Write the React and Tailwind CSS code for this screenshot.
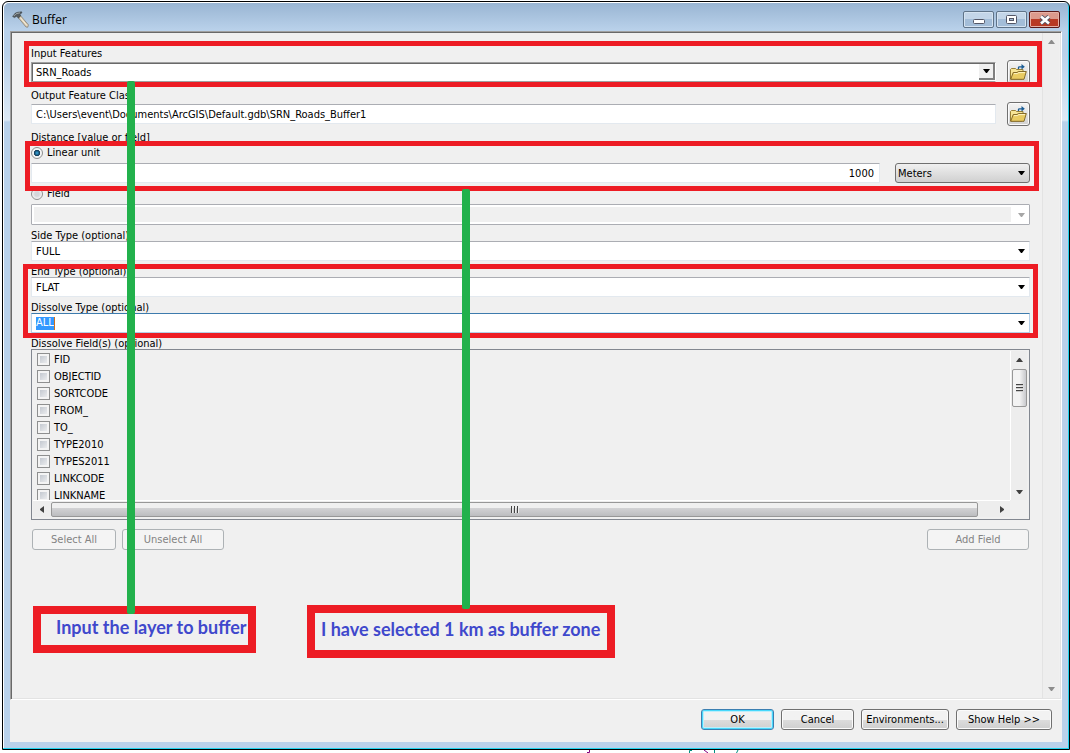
import React, { useState } from 'react';

const FIELDS = ['FID', 'OBJECTID', 'SORTCODE', 'FROM_', 'TO_', 'TYPE2010', 'TYPES2011', 'LINKCODE', 'LINKNAME'];

function Arrow({ className = 'fill-black', direction = 'down' }) {
  const points = {
    down: '0,0 7,0 4,4 3,4',
    up: '3,0 4,0 7,4 0,4',
    left: '4,0 4,7 0,4 0,3',
    right: '0,0 4,3 4,4 0,7',
  };
  const vertical = direction === 'down' || direction === 'up';
  return (
    <svg width={vertical ? 7 : 4} height={vertical ? 4 : 7} className={`shrink-0 pointer-events-none ${className}`} aria-hidden="true">
      <polygon points={points[direction]} />
    </svg>
  );
}

function HammerIcon() {
  return (
    <svg width="18" height="18" viewBox="0 0 18 18" aria-hidden="true">
      <path d="M6.2 6.6 L8.6 4.8 L16.4 13.8 L15.8 16.2 L14 16 Z" fill="#d9cbb0" stroke="#7d776d" strokeWidth="0.7" />
      <path d="M8.4 6.6 L15 14.6" stroke="#f8f1e2" strokeWidth="1" />
      <path d="M0.6 5.4 L3.4 2 L6 1.2 L9.6 0.8 L9.9 2 L7.8 3 L8.8 4.8 L6.4 7.2 L4.8 5.2 L2.4 6.6 Z" fill="#555b5f" stroke="#33383b" strokeWidth="0.5" />
      <path d="M1.8 5 L4 2.8 L8 1.8" stroke="#b4bcc0" strokeWidth="0.8" fill="none" />
    </svg>
  );
}

function FolderIcon() {
  return (
    <svg width="17" height="16" viewBox="0 0 17 16" aria-hidden="true">
      <path d="M0.5 15 V5.5 L1.5 4.5 H5.5 L6.5 5.5 H13 V8 L12 15 Z" fill="#f7e596" stroke="#8f7426" strokeWidth="0.9" />
      <path d="M0.7 15.3 L3.2 8.5 H7 L8.3 7.5 H16.3 L14 15.3 Z" fill="#e9cb62" stroke="#7a6120" strokeWidth="0.9" />
      <path d="M4 9.6 H7.4 L8.8 8.6 H15" stroke="#fff6c4" fill="none" />
      <path d="M8.5 5 V3.6 Q8.5 2.8 9.5 2.8 H12" stroke="#1b5c94" strokeWidth="1.3" fill="none" />
      <path d="M11.5 0 L14.8 2.8 L11.5 5.6 Z" fill="#1b5c94" />
    </svg>
  );
}

function BrowseButton({ label }) {
  return (
    <button
      type="button"
      aria-label={label}
      className="flex h-6 w-[23px] shrink-0 items-center justify-center rounded-[3px] border border-[#707070] bg-linear-to-b from-[#f4f4f4] to-[#d2d2d2] shadow-[inset_0_0_0_1px_#fbfbfb]"
    >
      <FolderIcon />
    </button>
  );
}

function FieldLabel({ children, htmlFor }) {
  return (
    <label htmlFor={htmlFor} className="block h-3 leading-[14px]">
      {children}
    </label>
  );
}

function Combo({ id, value }) {
  return (
    <div className="relative flex h-5 items-center border border-[#e3e9ef] border-t-[#abadb3] bg-white">
      <select id={id} className="h-full w-full appearance-none bg-transparent pl-1 pt-[2px] outline-none">
        <option>{value}</option>
      </select>
      <span className="pointer-events-none absolute right-1">
        <Arrow />
      </span>
    </div>
  );
}

function PushButton({ children, width, isDefault = false }) {
  const edge = isDefault
    ? 'border-[#3c7fb1] shadow-[inset_0_0_0_1px_#48d8fb,inset_0_0_0_2px_#bdeefb]'
    : 'border-[#707070] shadow-[inset_0_0_0_1px_#fbfbfb]';
  return (
    <button
      type="button"
      className={`h-[21px] rounded-[3px] border bg-linear-to-b from-[#f2f2f2] from-50% via-[#dddddd] via-50% to-[#cfcfcf] pt-px ${edge} ${width}`}
    >
      {children}
    </button>
  );
}

function DisabledButton({ children, className }) {
  return (
    <button type="button" disabled className={`h-[21px] rounded-[3px] border border-[#adb2b5] bg-[#f4f4f4] pt-px text-[#838383] ${className}`}>
      {children}
    </button>
  );
}

function TitleBar() {
  const chrome = 'flex h-[17px] w-[31px] items-center justify-center rounded-[2px] border';
  const plain = 'border-[#5f7388] bg-linear-to-b from-[#c3d5e8] from-50% to-[#a3bdd8] to-50% shadow-[inset_0_0_0_1px_#d5e3f1]';
  return (
    <header className="flex h-[29px] items-center pl-[2px] pr-[2px] pt-[6px]">
      <HammerIcon />
      <h1 className="ml-[2px] flex-1 font-['Open_Sans',sans-serif] text-[12px] leading-4">Buffer</h1>
      <div className="flex gap-[2px]">
        <button aria-label="Minimize" className={`${chrome} ${plain}`}>
          <svg width="12" height="5" className="mt-[3px]" aria-hidden="true">
            <rect x="0.5" y="0.5" width="11" height="4" rx="1" fill="#fff" stroke="#535666" />
          </svg>
        </button>
        <button aria-label="Maximize" className={`${chrome} ${plain}`}>
          <svg width="11" height="9" aria-hidden="true">
            <rect x="0.5" y="0.5" width="10" height="8" rx="1" fill="#fff" stroke="#535666" />
            <rect x="3.5" y="3.5" width="4" height="2" fill="#9fb8d3" stroke="#535666" />
          </svg>
        </button>
        <button aria-label="Close" className={`${chrome} border-[#5a1a1a] bg-linear-to-b from-[#dc9a8c] from-50% to-[#b83a24] to-50% shadow-[inset_0_0_0_1px_#e5b1a6]`}>
          <svg width="12" height="10" aria-hidden="true">
            <path d="M2 1.5 L10 8.5 M10 1.5 L2 8.5" stroke="#535666" strokeWidth="4.4" />
            <path d="M2 1.5 L10 8.5 M10 1.5 L2 8.5" stroke="#fff" strokeWidth="2.6" />
          </svg>
        </button>
      </div>
    </header>
  );
}

function FieldList() {
  return (
    <div className="border border-[#828790] pb-[2px] pl-px pr-[2px] pt-px">
      <div className="flex">
        <ul className="h-[149px] flex-1 overflow-hidden pl-1">
          {FIELDS.map((field) => (
            <li key={field} className="flex h-[17px] items-center">
              <label className="flex items-center gap-1">
                <input
                  type="checkbox"
                  className="size-[13px] appearance-none border border-[#8e8f8f] bg-linear-to-br from-[#b9bfc8] to-[#f6f6f6] shadow-[inset_0_0_0_2px_#f4f4f4]"
                />
                {field}
              </label>
            </li>
          ))}
        </ul>
        <div className="flex w-[17px] flex-col items-center border-l border-white bg-[#ededed]">
          <div className="flex h-[18px] items-center">
            <Arrow direction="up" className="fill-[#404040]" />
          </div>
          <div className="flex h-[38px] w-[15px] flex-col items-center justify-center gap-px rounded-[2px] border border-[#979797] bg-linear-to-r from-[#f3f3f3] from-50% to-[#c8c9cd]">
            <span className="h-[2px] w-[7px] border-t border-[#444] bg-[#ccc]" />
            <span className="h-[2px] w-[7px] border-t border-[#444] bg-[#ccc]" />
            <span className="h-[2px] w-[7px] border-t border-[#444] bg-[#ccc]" />
          </div>
          <div className="flex-1" />
          <div className="flex h-[17px] items-center">
            <Arrow className="fill-[#404040]" />
          </div>
        </div>
      </div>
      <div className="mr-[17px] flex h-[17px] items-center border-t border-white bg-[#ededed]">
        <div className="flex w-[18px] justify-center">
          <Arrow direction="left" className="fill-[#404040]" />
        </div>
        <div className="flex h-[15px] flex-1 items-center justify-center gap-px rounded-[2px] border border-[#979797] bg-linear-to-b from-[#f0f0f0] from-40% via-[#d2d2d4] via-40% to-[#bcbdc0]">
          <span className="h-[7px] w-[2px] border-l border-[#444] bg-[#eee]" />
          <span className="h-[7px] w-[2px] border-l border-[#444] bg-[#eee]" />
          <span className="h-[7px] w-[2px] border-l border-[#444] bg-[#eee]" />
        </div>
        <div className="flex w-8 justify-center pl-4">
          <Arrow direction="right" className="fill-[#404040]" />
        </div>
      </div>
    </div>
  );
}

function BufferForm() {
  const [distanceMode, setDistanceMode] = useState('linear');
  const radio =
    'size-3 appearance-none rounded-full border border-[#8e8f8f] bg-[radial-gradient(circle,#d4d6da_30%,#f4f4f4_70%)] checked:bg-[radial-gradient(circle,#2f8fc0_10%,#123a56_40%,#f4f4f4_50%)]';

  return (
    <form className="min-w-0 flex-1 pb-4 pl-[19px] pr-3 pt-[14px]">
      <FieldLabel htmlFor="input-features">Input Features</FieldLabel>
      <div className="mt-px flex h-6 items-center gap-[11px]">
        <div className="relative flex h-5 flex-1 items-center border border-[#a0a0a0] border-r-white bg-white shadow-[inset_1px_1px_0_#696969]">
          <select id="input-features" className="h-full w-full appearance-none bg-transparent pl-1 pt-[2px] outline-none">
            <option>SRN_Roads</option>
          </select>
          <span className="pointer-events-none absolute right-0 flex h-4 w-4 items-center justify-center border-b-2 border-r-2 border-[#808080] bg-[#f0f0f0]">
            <Arrow />
          </span>
        </div>
        <BrowseButton label="Browse input features" />
      </div>

      <div className="mt-[5px]">
        <FieldLabel htmlFor="output">Output Feature Class</FieldLabel>
      </div>
      <div className="mt-px flex h-6 items-center gap-[11px]">
        <input
          id="output"
          defaultValue="C:\Users\event\Documents\ArcGIS\Default.gdb\SRN_Roads_Buffer1"
          className="h-5 min-w-0 flex-1 border border-[#e3e9ef] border-t-[#abadb3] bg-white px-1 outline-none"
        />
        <BrowseButton label="Browse output feature class" />
      </div>

      <fieldset className="mt-[5px]">
        <legend className="h-3 leading-[14px]">Distance [value or field]</legend>
        <label className="mt-1 flex h-3 items-center gap-1 leading-[14px]">
          <input type="radio" name="distance" className={radio} checked={distanceMode === 'linear'} onChange={() => setDistanceMode('linear')} />
          Linear unit
        </label>
        <div className="mt-1 flex gap-[15px]">
          <input
            aria-label="Linear unit distance"
            defaultValue="1000"
            className="h-5 min-w-0 flex-1 border border-[#e3e9ef] border-t-[#abadb3] bg-white px-[5px] text-right outline-none"
          />
          <div className="relative flex h-5 w-[135px] items-center rounded-[3px] border border-[#707070] bg-linear-to-b from-[#f0f0f0] to-[#d0d0d0]">
            <select aria-label="Unit" className="h-full w-full appearance-none bg-transparent pl-[2px] pt-[2px] outline-none">
              <option>Meters</option>
            </select>
            <span className="pointer-events-none absolute right-1">
              <Arrow />
            </span>
          </div>
        </div>
        <label className="mt-[5px] flex h-3 items-center gap-1 leading-[14px]">
          <input type="radio" name="distance" className={radio} checked={distanceMode === 'field'} onChange={() => setDistanceMode('field')} />
          Field
        </label>
        <div className="relative mt-1 flex h-[21px] items-center rounded-[1px] border border-[#abadb3] bg-white p-[2px] pr-[18px]">
          <select aria-label="Distance field" disabled className="h-full w-full appearance-none bg-[#f0f0f0]" />
          <span className="absolute right-1">
            <Arrow className="fill-[#a6a6a6]" />
          </span>
        </div>
      </fieldset>

      <div className="mt-1 flex flex-col gap-1">
        <div>
          <FieldLabel htmlFor="side-type">Side Type (optional)</FieldLabel>
          <Combo id="side-type" value="FULL" />
        </div>
        <div>
          <FieldLabel htmlFor="end-type">End Type (optional)</FieldLabel>
          <Combo id="end-type" value="FLAT" />
        </div>
        <div>
          <FieldLabel htmlFor="dissolve-type">Dissolve Type (optional)</FieldLabel>
          <div className="flex h-5 items-center justify-between border border-[#b5cfe7] border-t-[#3d7bad] bg-white px-1">
            <select id="dissolve-type" className="h-[13px] appearance-none border-r border-[#d0701c] bg-[#3399ff] text-white outline-none">
              <option>ALL</option>
            </select>
            <Arrow />
          </div>
        </div>
        <div>
          <p className="h-3 leading-[14px]">Dissolve Field(s) (optional)</p>
          <FieldList />
        </div>
      </div>

      <div className="mt-[9px] flex gap-[6px]">
        <DisabledButton className="ml-px w-[84px]">Select All</DisabledButton>
        <DisabledButton className="w-[102px]">Unselect All</DisabledButton>
        <DisabledButton className="ml-auto mr-px w-[102px]">Add Field</DisabledButton>
      </div>
    </form>
  );
}

function Annotations() {
  const callout = "absolute border-8 border-[#ed1c24] font-['Lato',sans-serif] text-[18px] font-bold leading-5 text-[#3f48cc] whitespace-nowrap";
  return (
    <div className="pointer-events-none absolute inset-0">
      <div className="absolute left-[24px] right-[28px] top-[41px] h-[46px] border-5 border-[#ed1c24]" />
      <div className="absolute left-[25px] right-[31px] top-[141px] h-[50px] border-5 border-[#ed1c24]" />
      <div className="absolute left-[23px] right-[32px] top-[264px] h-[74px] border-5 border-[#ed1c24]" />
      <p className={`${callout} left-[33px] top-[606px] h-[47px] w-[223px] pl-[15px] pt-[3px]`}>Input the layer to buffer</p>
      <p className={`${callout} left-[307px] top-[605px] h-[53px] w-[308px] pl-[6px] pt-[6px]`}>I have selected 1 km as buffer zone</p>
      <div className="absolute left-[127px] top-[81px] h-[533px] w-2 rounded-[2px] bg-[#22b14c]" />
      <div className="absolute left-[462px] top-[189px] h-[420px] w-2 rounded-[2px] bg-[#22b14c]" />
    </div>
  );
}

export default function App() {
  return (
    <div className="relative flex min-h-screen flex-col bg-white pl-[2px] pt-px font-['DejaVu_Sans_Condensed','DejaVu_Sans',sans-serif] text-[11px] leading-3 text-black">
      <div className="flex flex-1 flex-col rounded-t-[6px] border border-black bg-[linear-gradient(to_bottom,#98b4d2_0px,#b9d1ea_28px,#b9d1ea_50px,#dde9f5_118px,#b9d1ea_120px)] px-[7px] pb-[7px] shadow-[inset_-1px_-1px_0_#22d3ee,inset_1px_1px_0_#ffffff]">
        <TitleBar />
        <main className="flex flex-1 flex-col bg-[#f0f0f0]">
          <div className="flex flex-1 border border-b-white border-l-[#a0a0a0] border-r-white border-t-[#a0a0a0] shadow-[inset_1px_1px_0_#696969,inset_-1px_-1px_0_#e3e3e3]">
            <div className="flex min-w-0 flex-1 pl-px pt-px">
              <BufferForm />
            </div>
            <div className="mb-px mr-[2px] mt-px flex w-[17px] flex-col items-center justify-between border-l border-[#e3e3e3] bg-[#eeeeee] py-[7px]">
              <Arrow direction="up" className="fill-[#8c8c8c]" />
              <Arrow className="fill-[#8c8c8c]" />
            </div>
          </div>
          <footer className="flex h-[42px] justify-end gap-[7px] pr-[10px] pt-[9px]">
            <PushButton width="w-[73px]" isDefault>OK</PushButton>
            <PushButton width="w-[73px]">Cancel</PushButton>
            <PushButton width="w-[88px]">Environments...</PushButton>
            <PushButton width="w-[96px]">Show Help &gt;&gt;</PushButton>
          </footer>
        </main>
      </div>
      <svg width="200" height="3" className="ml-[570px]" aria-hidden="true">
        <path d="M15 2.5 H17.5 V0" stroke="#800080" fill="none" />
        <path d="M117.5 3 V0.5 H120 M142.5 0 V3 M166 0 L164.5 3" stroke="#009080" fill="none" />
        <path d="M132 0 L136 3" stroke="#800080" fill="none" />
      </svg>
      <Annotations />
    </div>
  );
}
